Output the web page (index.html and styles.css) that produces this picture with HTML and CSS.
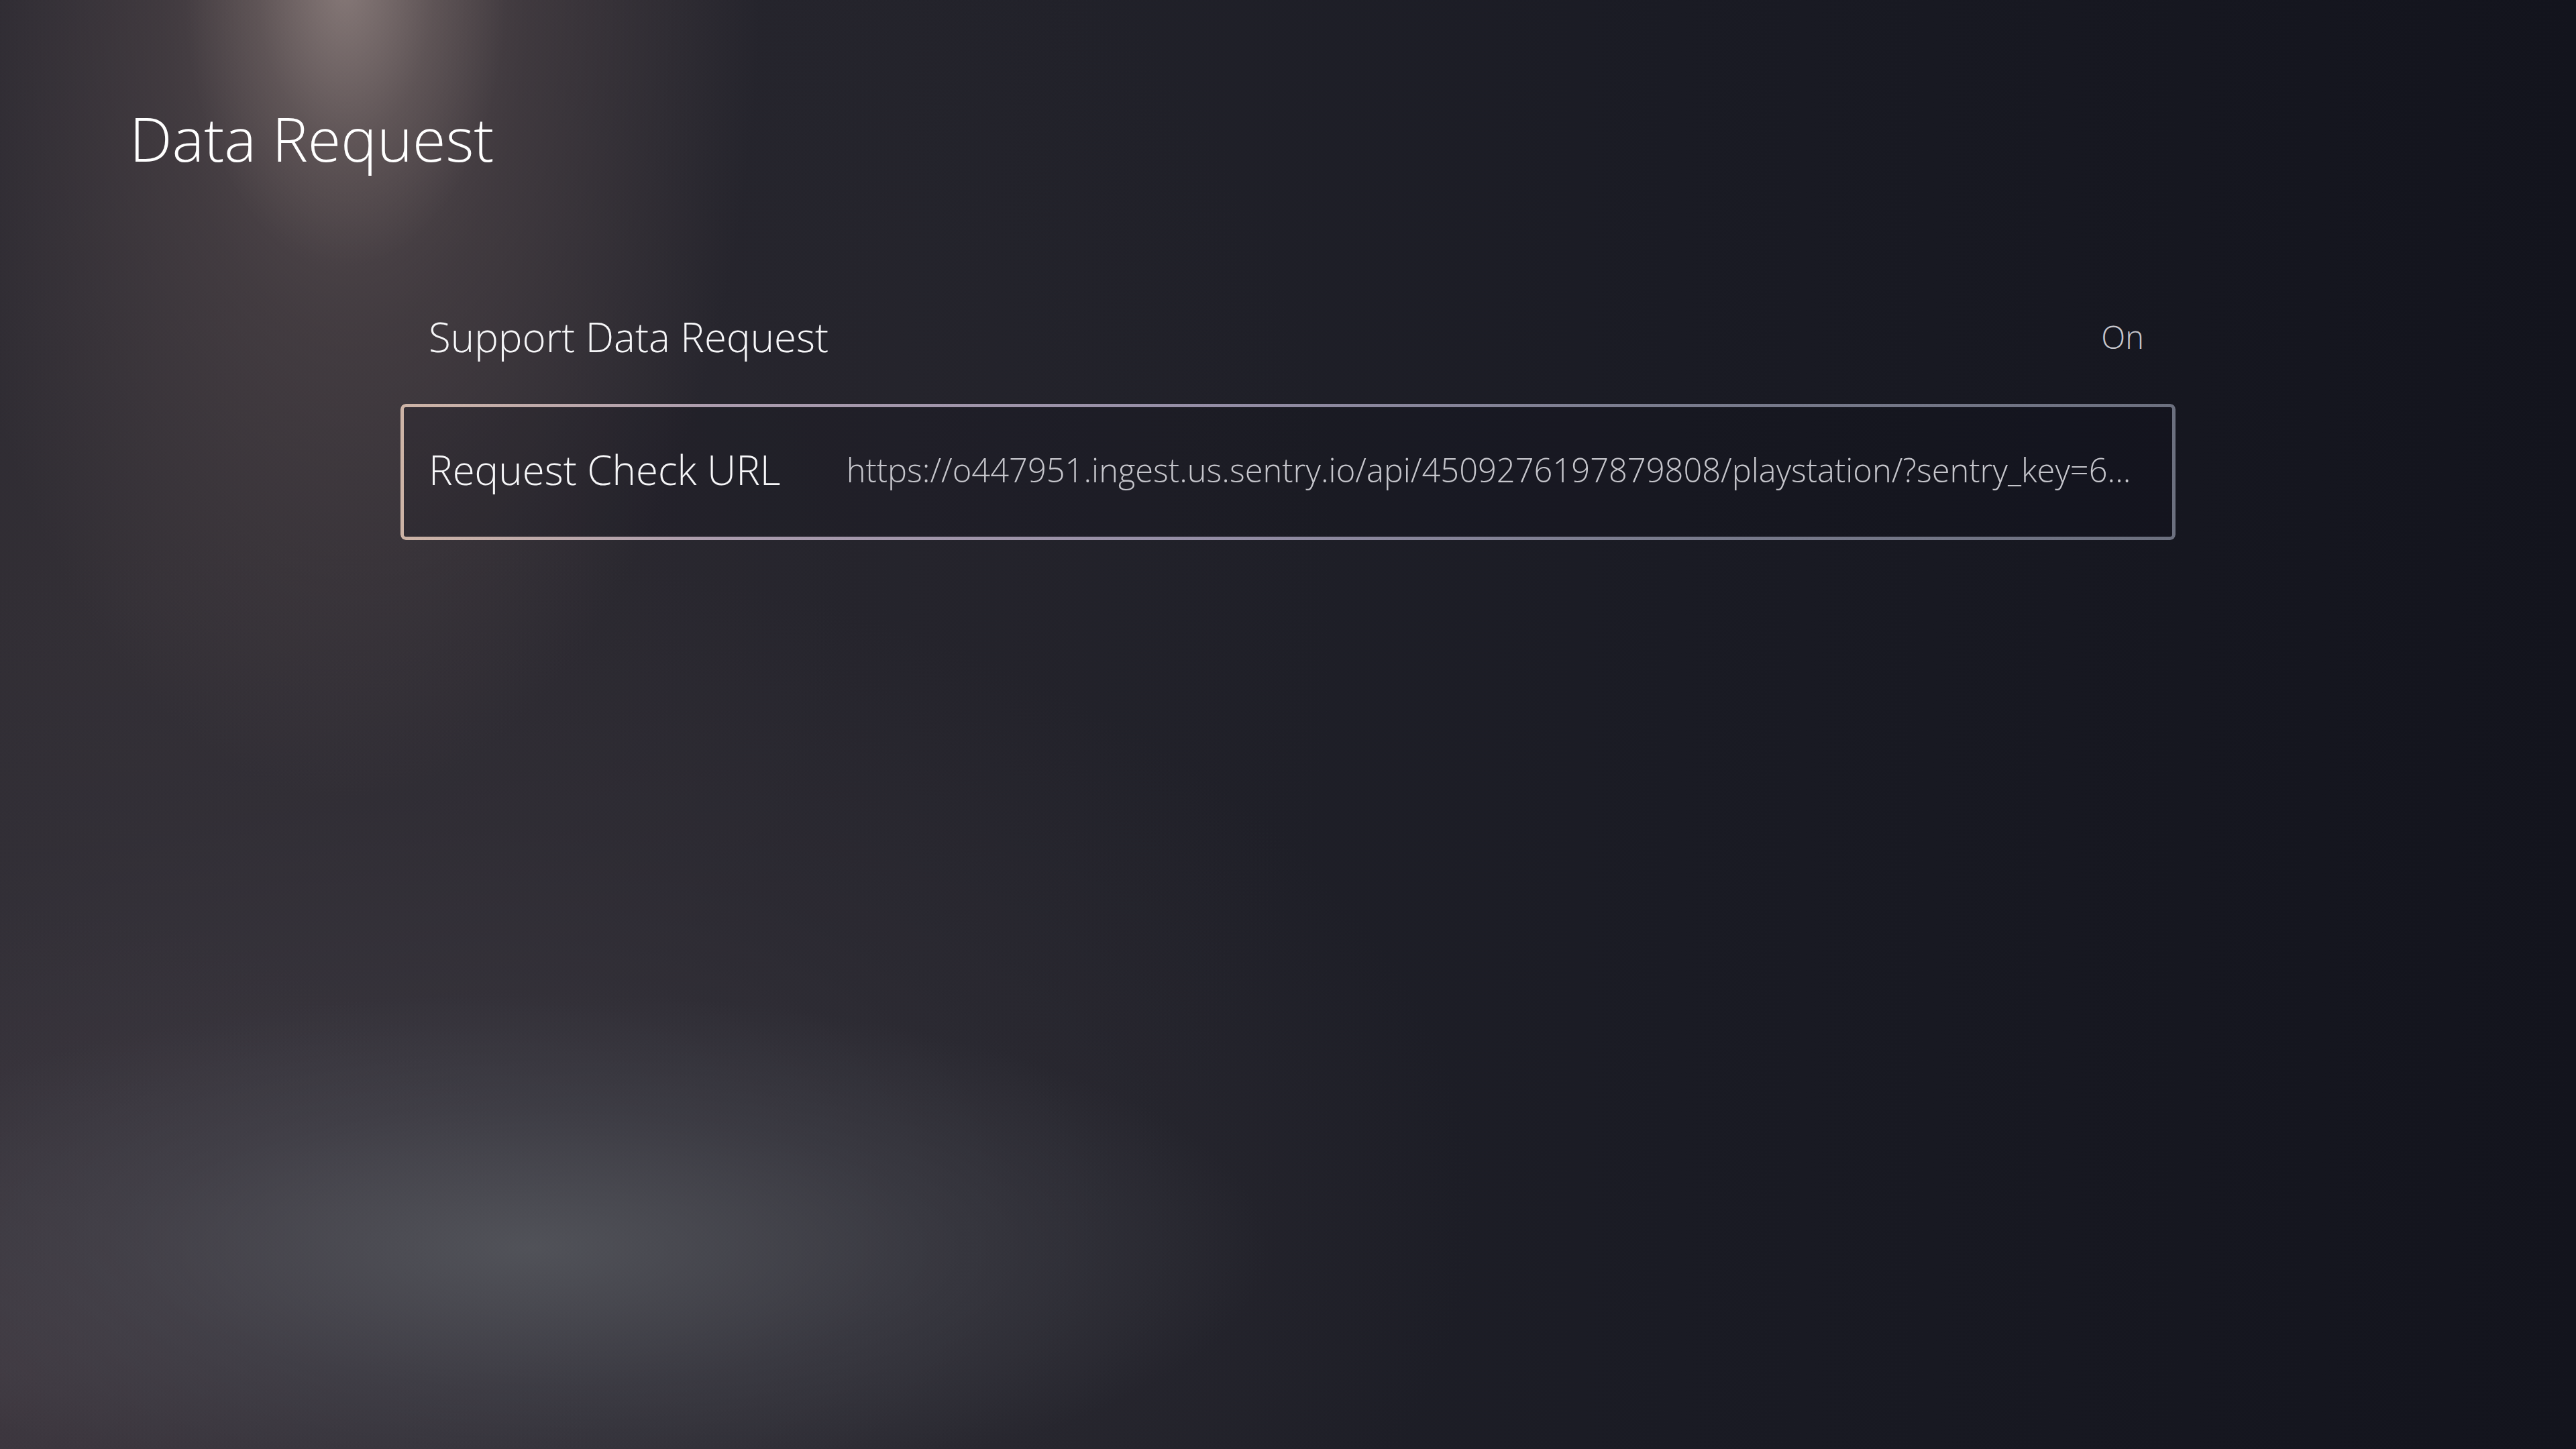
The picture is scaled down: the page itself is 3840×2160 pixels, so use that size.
FILE: index.html
```html
<!DOCTYPE html>
<html lang="en">
<head>
<meta charset="utf-8">
<title>Data Request</title>
<link rel="stylesheet" href="styles.css">
</head>
<body>
<div class="screen">
  <header class="header">
    <h1 class="title">Data Request</h1>
  </header>
  <main class="list">
    <div class="row">
      <span class="label">Support Data Request</span>
      <span class="value value-right">On</span>
    </div>
    <div class="row row-focused">
      <span class="label">Request Check URL</span>
      <span class="value value-url">https://o447951.ingest.us.sentry.io/api/4509276197879808/playstation/?sentry_key=6...</span>
    </div>
  </main>
</div>
</body>
</html>
```
FILE: styles.css
```css
html, body {
  margin: 0;
  padding: 0;
}
body {
  width: 3840px;
  height: 2160px;
  overflow: hidden;
  font-family: "Open Sans", "Noto Sans", sans-serif;
  font-weight: 300;
  color: #f4f4f6;
}
.screen {
  width: 3840px;
  height: 2160px;
  box-sizing: border-box;
  display: flex;
  flex-direction: column;
  background:
    radial-gradient(ellipse 240px 420px at 515px -20px, rgba(160,145,142,0.6) 0%, rgba(140,125,122,0.25) 55%, rgba(120,105,105,0) 100%),
    radial-gradient(ellipse 620px 1250px at 515px -60px, rgba(112,98,98,0.75) 0%, rgba(92,80,82,0.45) 45%, rgba(70,62,66,0) 100%),
    radial-gradient(ellipse 1100px 380px at 790px 1860px, rgba(92,95,101,0.7) 0%, rgba(78,80,88,0.35) 55%, rgba(60,62,70,0) 100%),
    radial-gradient(ellipse 900px 700px at 0px 2050px, rgba(76,66,74,0.5) 0%, rgba(66,58,66,0.25) 55%, rgba(50,46,56,0) 100%),
    radial-gradient(ellipse 1700px 1000px at 500px 1800px, rgba(66,62,70,0.7) 0%, rgba(55,52,60,0.35) 60%, rgba(40,40,48,0) 100%),
    radial-gradient(ellipse 1800px 1600px at 200px 900px, rgba(52,48,54,0.9) 0%, rgba(40,38,46,0.4) 60%, rgba(30,30,40,0) 100%),
    linear-gradient(90deg, #2a2830 0%, #23232b 35%, #1a1b24 65%, #13141d 100%);
}
.header {
  padding: 152px 0 0 193px;
  height: 248px;
  box-sizing: border-box;
}
.title {
  margin: 0;
  font-size: 90px;
  font-weight: 300;
  line-height: 108px;
  letter-spacing: 0;
  color: #ffffff;
}
.list {
  margin-left: 597px;
  width: 2646px;
  display: flex;
  flex-direction: column;
  margin-top: 154px;
}
.row {
  height: 200px;
  box-sizing: border-box;
  padding: 0 47px 0 42px;
  display: flex;
  align-items: center;
  gap: 98px;
}
.row-focused {
  position: relative;
  height: 203px;
  padding-bottom: 8px;
  border-radius: 8px;
  background: rgba(12, 12, 20, 0.18);
}
.row-focused::before {
  content: "";
  position: absolute;
  inset: 0;
  border-radius: 8px;
  padding: 5px;
  background: linear-gradient(90deg, #cdb4a6 0%, #ab9cae 18%, #958ea6 45%, #7a7c8e 70%, #6c707f 100%);
  -webkit-mask: linear-gradient(#000 0 0) content-box, linear-gradient(#000 0 0);
  -webkit-mask-composite: xor;
  mask-composite: exclude;
  pointer-events: none;
}
.label {
  font-size: 60px;
  font-weight: 300;
  white-space: nowrap;
  color: #f6f6f8;
  flex: none;
}
.value {
  font-size: 47px;
  font-weight: 300;
  color: #c6c6cc;
  white-space: nowrap;
}
.value-right {
  margin-left: auto;
}
.value-url {
  flex: 1;
  min-width: 0;
  font-size: 48.8px;
  overflow: hidden;
  text-overflow: ellipsis;
}
```
